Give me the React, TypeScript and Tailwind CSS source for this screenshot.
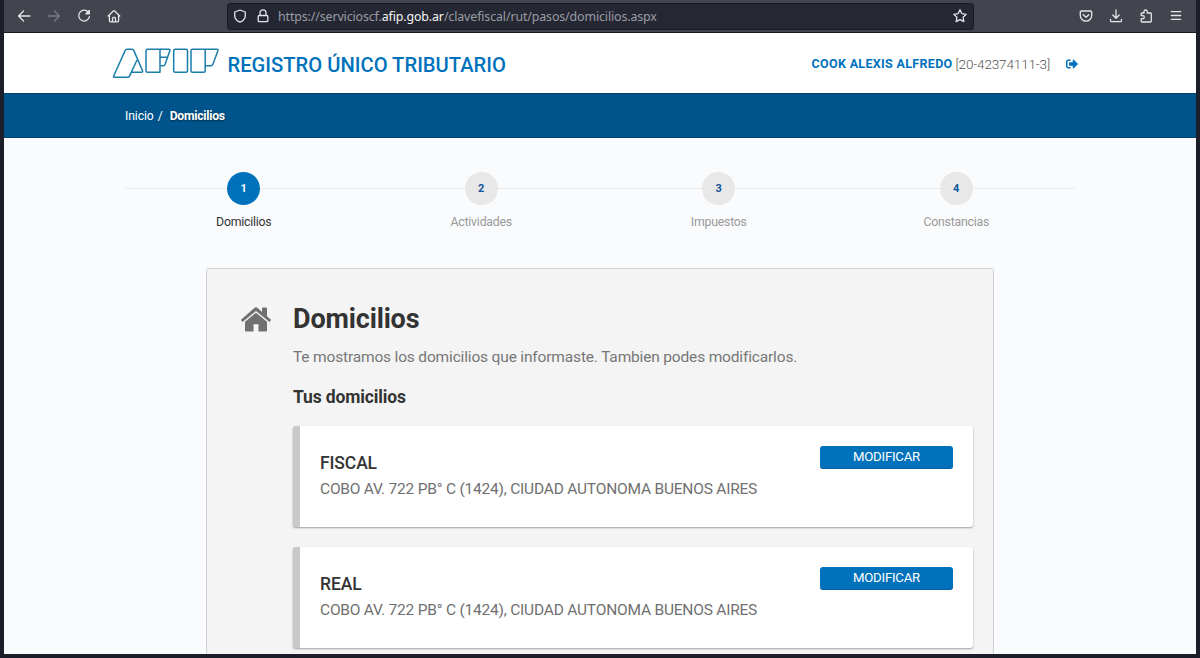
import type { ReactNode } from "react";
import { FaSignOutAlt } from "react-icons/fa";

const steps = [
  { number: 1, label: "Domicilios", active: true },
  { number: 2, label: "Actividades", active: false },
  { number: 3, label: "Impuestos", active: false },
  { number: 4, label: "Constancias", active: false },
];

const addresses = [
  { type: "FISCAL", address: "COBO AV. 722 PB° C (1424), CIUDAD AUTONOMA BUENOS AIRES" },
  { type: "REAL", address: "COBO AV. 722 PB° C (1424), CIUDAD AUTONOMA BUENOS AIRES" },
];

const ToolbarIcon = ({ children, className = "" }: { children: ReactNode; className?: string }) => (
  <svg
    viewBox="0 0 16 16"
    fill="none"
    stroke="currentColor"
    strokeWidth="1.3"
    strokeLinecap="round"
    strokeLinejoin="round"
    className={`h-4 w-4 shrink-0 text-[#e3e5e8] ${className}`}
  >
    {children}
  </svg>
);

const BrowserBar = () => (
  <div className="flex h-[33px] shrink-0 items-center border-b border-[#17191f] bg-[#42454d] px-[12px]">
    <div className="flex w-[211px] items-center gap-[14px]">
      <ToolbarIcon>
        <path d="M14 8H2.5M7.5 3L2.5 8l5 5" />
      </ToolbarIcon>
      <ToolbarIcon className="opacity-35">
        <path d="M2 8h11.5M8.5 3l5 5-5 5" />
      </ToolbarIcon>
      <ToolbarIcon>
        <path d="M12.300 4.200A5.400 5.400 0 1 0 13.400 8.700" />
        <path d="M13.300 2.500v3.300H10z" fill="currentColor" />
      </ToolbarIcon>
      <ToolbarIcon>
        <path d="M2.200 8L7.300 3q.7-.6 1.400 0l5.100 5M3.400 7v5.800q0 1.100 1.100 1.100h7q1.100 0 1.100-1.100V7M6.500 13.700v-3.300q0-1.100 1-1.100h1q1 0 1 1.100v3.300" />
      </ToolbarIcon>
    </div>
    <div className="flex h-[27px] w-[747px] items-center rounded-[3px] border border-[#191b24] bg-[#252833] px-[5px] pl-[4px]">
      <ToolbarIcon>
        <path d="M8 2L13.300 4v3.500c0 3-2.300 5.500-5.300 6.700-3-1.200-5.300-3.700-5.300-6.700V4z" />
      </ToolbarIcon>
      <ToolbarIcon className="ml-[7px]">
        <path d="M4.200 7.500h7.600q1 0 1 1v4.200q0 1-1 1H4.200q-1 0-1-1V8.500q0-1 1-1zM5 7.300V4.800a3 3 0 0 1 6 0v2.500" />
      </ToolbarIcon>
      <span className="ml-[7px] pt-[2px] font-['Noto_Sans',sans-serif] text-[12.400px] tracking-[-0.120px] whitespace-pre text-[#9a9ca4]">
        https://servicioscf.<span className="text-[#f4f4f6]">afip.gob.ar</span>/clavefiscal/rut/pasos/domicilios.aspx
      </span>
      <ToolbarIcon className="ml-auto">
        <path d="M8 1.800l1.900 3.900 4.300.6-3.100 3 .7 4.300L8 11.600l-3.800 2 .7-4.300-3.100-3 4.300-.6z" />
      </ToolbarIcon>
    </div>
    <div className="ml-auto flex items-center gap-[14px]">
      <ToolbarIcon>
        <path d="M3.500 3h9q1.200 0 1.200 1.200V7.500a5.700 5.700 0 0 1-11.400 0V4.200Q2.300 3 3.500 3zM5.200 6.700L8 9.300l2.800-2.600" />
      </ToolbarIcon>
      <ToolbarIcon>
        <path d="M8 2v8M4.800 7L8 10.200 11.200 7M2.500 11.500v1q0 1.200 1.200 1.200h8.600q1.200 0 1.200-1.200v-1" />
      </ToolbarIcon>
      <ToolbarIcon>
        <path d="M6 5V3.600a1.600 1.600 0 0 1 3.200 0V5h3.300q.8 0 .8.800v7.400q0 .8-.8.800H4q-.8 0-.8-.8v-2.500h1.600a1.500 1.500 0 0 0 0-3H3.200V5.800Q3.200 5 4 5z" />
      </ToolbarIcon>
      <ToolbarIcon>
        <path d="M3.300 3.700h9.400M3.300 7.500h9.400M3.300 11.300h9.400" />
      </ToolbarIcon>
    </div>
  </div>
);

const AfipLogo = () => (
  <svg viewBox="0 0 108 32" className="h-8 w-[108px] shrink-0" fill="none" stroke="#1b7eaa" strokeWidth="1.5" strokeLinejoin="round">
    <path d="M15 1.300h5q1.300 0 1.900 1.300l8.600 20.200q.6 1.500-1 1.500H19.500M15 1.300q-1.300 0-1.900 1.300L1.700 28q-.6 1.300.9 1.300h13.200q1.200 0 1.700-1.200L25 12" />
    <path d="M35.500 1.300H48V24.300H35.500Q34 24.300 34 22.800V2.800q0-1.500 1.500-1.500z" />
    <path d="M48 1.300h9q1.300 0 .9 1.200L53.200 16q-.6 1.700-2 1.700H48M48 9.300h7.500" />
    <path d="M63.200 1.300h10.800q1.500 0 1.500 1.500v20q0 1.500-1.500 1.500H63.200q-1.500 0-1.500-1.500v-20q0-1.500 1.500-1.500z" />
    <path d="M80.500 1.300H93.200V22.800Q93.200 24.300 91.700 24.300H80.500q-1.500 0-1.500-1.500v-20q0-1.500 1.500-1.500zM93.200 1.300h11.800q1.500 0 1 1.300l-5 13.400q-.6 1.700-2.300 1.700H93.200" />
  </svg>
);

const Header = () => (
  <header className="flex h-[60px] shrink-0 items-center bg-white pt-px pr-[118px] pl-[108px]">
    <AfipLogo />
    <h1 className="ml-[7.500px] pt-[4px] text-[20.200px] font-medium whitespace-nowrap text-[#0072bb]">REGISTRO ÚNICO TRIBUTARIO</h1>
    <div className="ml-auto flex items-center text-[13px] whitespace-nowrap">
      <span className="pt-[2px] text-[12.500px] font-bold tracking-[0.320px] text-[#0072bb]">COOK ALEXIS ALFREDO</span>
      <span className="ml-[3px] pt-[2px] text-[13.500px] font-light tracking-[-0.140px] text-[#555555]">[20-42374111-3]</span>
      <FaSignOutAlt className="ml-[16px] h-[12px] w-[12px] text-[#0072bb]" />
    </div>
  </header>
);

const Stepper = () => (
  <div className="relative mx-[121px] mt-[34px] grid w-[950px] grid-cols-4">
    <div className="absolute top-[16px] h-px w-full bg-[#e8eaec]" />
    {steps.map((step) => (
      <div key={step.number} className="relative flex flex-col items-center">
        <div
          className={`flex h-[33px] w-[33px] items-center justify-center rounded-full pt-px text-[11px] font-bold ${
            step.active ? "bg-[#0072bb] text-white" : "bg-[#e8e8e8] text-[#0f559c]"
          }`}
        >
          {step.number}
        </div>
        <span className={`mt-[9px] text-[12.300px] leading-4 tracking-[-0.220px] ${step.active ? "text-[#333333]" : "text-[#999999]"}`}>
          {step.label}
        </span>
      </div>
    ))}
  </div>
);

const HouseIcon = () => (
  <svg viewBox="0 0 30 25" className="h-[25px] w-[30px]" fill="#707070">
    <path d="M15 .3q.9 0 1.700.7L21 4.900V1.200q0-.7.7-.7h3.600q.7 0 .7.700v8l3.700 3.300q.5.4.1.900l-.9 1.100q-.5.5-1 .1L15 3.900 2.100 14.600q-.5.4-1-.1l-.9-1.100q-.4-.5.1-.9L13.300 1Q14.100.3 15 .3z" />
    <path d="M15 5.700l11 9.100v8.700q0 1-1 1h-7.500v-7.300h-5v7.300H5q-1 0-1-1v-8.700z" />
  </svg>
);

const AddressCard = ({ type, address }: { type: string; address: string }) => (
  <div className="flex h-[101px] justify-between rounded-[3px] border-l-[7px] border-[#c9c9c9] bg-white px-[20px] shadow-[0_1px_2px_rgba(0,0,0,0.35)]">
    <div className="pt-[27px] whitespace-nowrap">
      <h4 className="text-[17.500px] leading-5 font-medium tracking-[-0.120px] text-[#333333]">{type}</h4>
      <p className="mt-[6px] text-[15.500px] leading-5 tracking-[-0.210px] text-[#707070]">{address}</p>
    </div>
    <button className="mt-[20px] h-[23px] w-[133px] rounded-[3px] border-b border-[#005c9b] bg-[#0072bb] text-[13.200px] leading-[22px] tracking-[-0.220px] text-white">
      MODIFICAR
    </button>
  </div>
);

const App = () => {
  return (
    <div className="h-[658px] w-[1200px] overflow-hidden bg-[#1c1f29] px-[4px] pb-[4px] font-[Roboto,sans-serif]">
      <div className="flex h-full flex-col overflow-hidden bg-[#fafbfd]">
        <BrowserBar />
        <Header />
        <nav className="flex h-[45px] shrink-0 items-center border-y border-[#003f70] bg-[#00548b] pt-px pl-[121px] text-[12.200px] tracking-[-0.100px] text-white">
          <span>Inicio</span>
          <span className="mx-[4px]">/</span>
          <span className="ml-[3px] font-bold tracking-[-0.260px] [text-shadow:0_1px_2px_rgba(0,0,0,0.5)]">Domicilios</span>
        </nav>
        <Stepper />
        <main className="mt-[38px] ml-[202px] h-[500px] w-[788px] shrink-0 rounded-[3px] border border-[#cfd1d4] bg-[#f4f4f4] pt-[34px] pr-[20px] pl-[34px]">
          <div className="flex">
            <div className="w-[52px] pt-[4px]">
              <HouseIcon />
            </div>
            <div className="flex-1">
              <h2 className="text-[27px] leading-8 font-bold tracking-[-0.150px] text-[#333333]">Domicilios</h2>
              <p className="mt-[12px] text-[15.500px] leading-5 tracking-[-0.165px] whitespace-nowrap text-[#777777]">
                Te mostramos los domicilios que informaste. Tambien podes modificarlos.
              </p>
              <h3 className="mt-[20px] mb-[19px] text-[17.500px] leading-5 font-bold tracking-[-0.140px] text-[#333333]">Tus domicilios</h3>
              <div className="flex flex-col gap-[20px]">
                {addresses.map((item) => (
                  <AddressCard key={item.type} type={item.type} address={item.address} />
                ))}
              </div>
            </div>
          </div>
        </main>
      </div>
    </div>
  );
};

export default App;
